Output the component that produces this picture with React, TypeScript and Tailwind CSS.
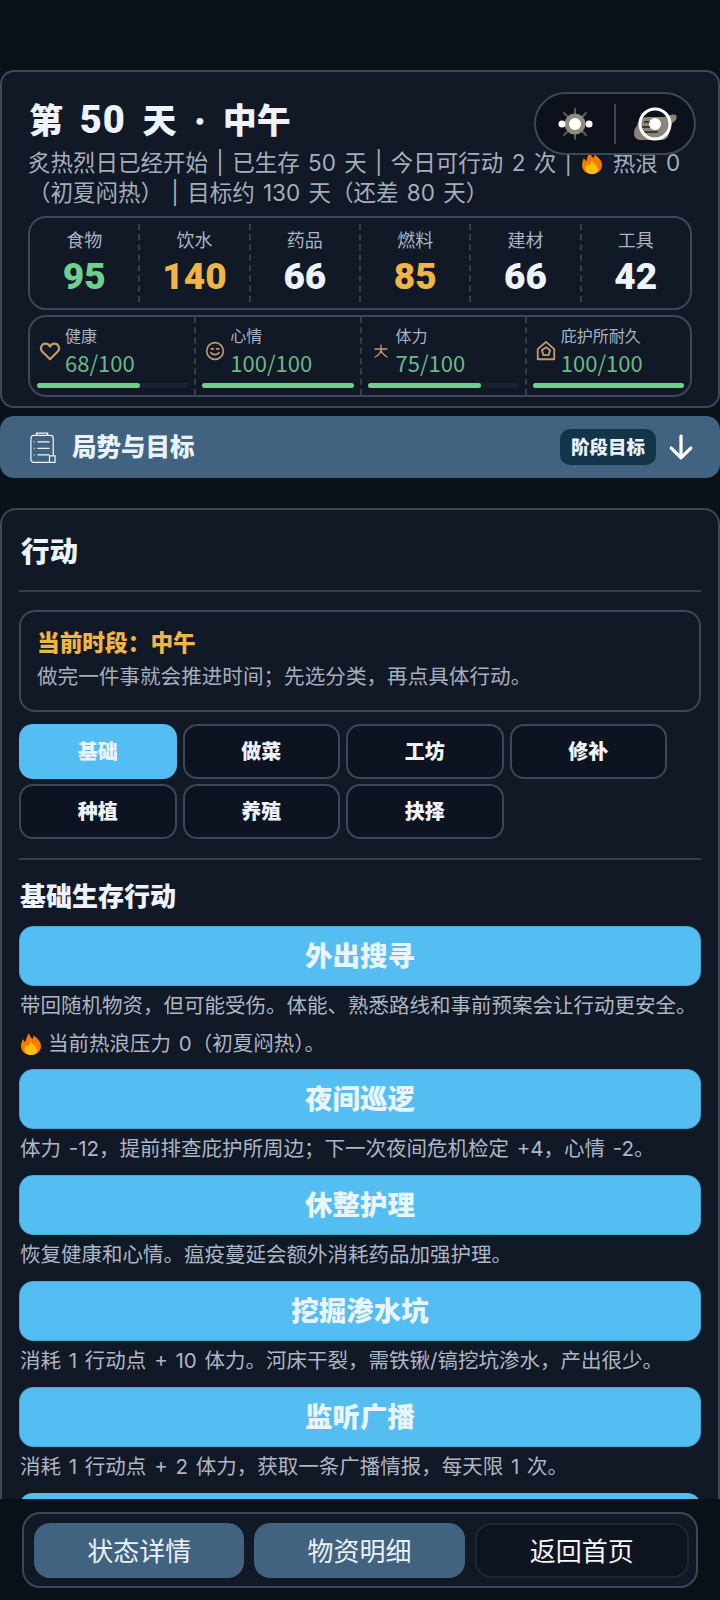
const FONT = 'Inter, "Noto Sans CJK SC", "Noto Sans", sans-serif';

const STOCKS = [
  { label: "食物", value: "95", color: "text-[#6fcf8e]" },
  { label: "饮水", value: "140", color: "text-[#f0b545]" },
  { label: "药品", value: "66", color: "text-[#eef3fb]" },
  { label: "燃料", value: "85", color: "text-[#f0b545]" },
  { label: "建材", value: "66", color: "text-[#eef3fb]" },
  { label: "工具", value: "42", color: "text-[#eef3fb]" },
];

const TABS = ["基础", "做菜", "工坊", "修补", "种植", "养殖", "抉择"];

function Flame({ className }: { className?: string }) {
  return (
    <svg viewBox="0 0 24 24" className={className}>
      <path d="M12 23c-6 0-10-4-10-9 0-3 1-5 2-7 .5 1.500 1.500 2.500 2.500 3C7 7 8 4 10 1c.5 3 2 5 3.500 6 .5-1 1-2 1-3.500 3 2 7.500 5.500 7.500 10.500 0 5-4 9-10 9z" fill="#f57c00" />
      <path d="M12 23c-4 0-6.500-2.500-6.500-5.500 0-2 1-3.500 2.500-5 .5 1 1 1.500 2 2 0-2 1-3.500 2-5 .5 2 4 4 6 8 .5 3-2 5.500-6 5.500z" fill="#ffc107" />
    </svg>
  );
}

function HeartIcon() {
  return (
    <svg viewBox="0 0 24 24" className="w-[22px] h-[22px]" fill="none" stroke="#c39a6b" strokeWidth="2.400">
      <path d="M12 21 3.500 12.500C.5 9 3 4 7 4c2.200 0 4 1.200 5 3 1-1.800 2.800-3 5-3 4 0 6.500 5 3.500 8.500z" strokeLinejoin="round" />
    </svg>
  );
}

function SmileIcon() {
  return (
    <svg viewBox="0 0 24 24" className="w-[20px] h-[20px]" fill="none" stroke="#c39a6b" strokeWidth="2">
      <circle cx="12" cy="12" r="10" />
      <path d="M7 14c1.500 3 8.500 3 10 0" strokeLinecap="round" />
      <path d="M7.500 9.500h2.500M14 9.500h2.500" strokeLinecap="round" />
    </svg>
  );
}

function RunIcon() {
  return (
    <svg viewBox="0 0 24 24" className="w-[16px] h-[16px]" fill="none" stroke="#c39a6b" strokeWidth="2">
      <path d="M3 9h18M12 3v6c0 5-3 9-9 12M12 10c1 5 4 8 9 11" strokeLinecap="round" />
    </svg>
  );
}

function ShelterIcon() {
  return (
    <svg viewBox="0 0 24 24" className="w-[22px] h-[22px]" fill="none" stroke="#c39a6b" strokeWidth="2">
      <path d="M3 10 12 2l9 8v11H3z" strokeLinejoin="round" />
      <path d="m12 8 4.500 3.200-1.700 5.300H9.200l-1.700-5.300z" strokeLinejoin="round" />
    </svg>
  );
}

function ClipboardIcon() {
  return (
    <svg viewBox="0 0 28 34" className="w-[26px] h-[33px]" fill="none" stroke="#f1f6fb" strokeWidth="1.300">
      <rect x="1" y="4" width="24" height="29" rx="3" />
      <path d="M7 4V1.500h12V4" />
      <path d="M8 11h13M8 18h13M8 25h13" />
      <path d="M4 11h1M4 18h1M4 25h1" />
      <rect x="21" y="26" width="6" height="7" fill="#41637f" />
    </svg>
  );
}

function SunIcon() {
  return (
    <svg viewBox="0 0 44 44" className="w-[44px] h-[44px]">
      <g stroke="#5f5c54" strokeWidth="2" strokeLinecap="round">
        <path d="M22 7v6M22 31v6M11 11l4 4M33 11l-4 4M11 33l4-4M33 33l-4-4" />
      </g>
      <circle cx="22" cy="22" r="10.500" fill="#8f8b7f" />
      <circle cx="22" cy="22" r="6" fill="#ffffff" />
      <circle cx="36" cy="22" r="3.500" fill="#ffffff" />
      <circle cx="9" cy="22" r="3.500" fill="#ffffff" />
    </svg>
  );
}

function CameraIcon() {
  return (
    <svg viewBox="0 0 46 44" className="w-[46px] h-[44px]">
      <path d="M5 24c1-6 6-9 10-9h16c4 0 8-4 13-2 2 3-1 7-4 8l-3 11c-1 4-4 6-8 6H9c-5 0-7-3-7-7 0-3 1-5 3-7z" fill="#8a8578" />
      <path d="M12 20h16M10 25h16M12 30h14" stroke="#3c3b36" strokeWidth="2" />
      <circle cx="23" cy="22" r="15" fill="none" stroke="#ffffff" strokeWidth="3" />
      <circle cx="23" cy="22" r="6" fill="#ffffff" />
    </svg>
  );
}

function Vital({ icon, label, value, pct, divider }: { icon: React.ReactNode; label: string; value: string; pct: number; divider: boolean }) {
  return (
    <div className={`flex-1 min-w-0 pr-[6px] pt-[8px] ${divider ? "pl-[6px] border-l-2 border-dashed border-[#333d4d]" : "pl-[7px]"}`}>
      <div className="flex items-center">
        <div className="w-[26px] flex justify-center shrink-0">{icon}</div>
        <div className="ml-[2px] min-w-0">
          <div className="text-[16px] leading-[22px] text-[#aab3c2] whitespace-nowrap">{label}</div>
          <div className="font-['Noto_Sans_CJK_SC'] text-[22px] leading-[30px] text-[#6bb786] whitespace-nowrap">{value}</div>
        </div>
      </div>
      <div className="h-[5px] mt-[6px] rounded-full bg-[#1a2130]">
        <div className="h-full rounded-full bg-[#6fcf8e]" style={{ width: `${pct}%` }} />
      </div>
    </div>
  );
}

function ActionButton({ title, desc, extra }: { title: string; desc: string; extra?: boolean }) {
  return (
    <div className={extra ? "mb-[10px]" : "mb-[11px]"}>
      <button className="w-full h-[60px] pt-[2px] rounded-[14px] bg-[#54bdf2] border border-[#4aa6d6] text-[#eaf4fb] text-[27.500px] font-black">
        {title}
      </button>
      <p className="mt-[5px] ml-[1px] text-[20.500px] leading-[30px] text-[#aeb6c4] whitespace-nowrap [word-spacing:2px]">{desc}</p>
      {extra && (
        <p className="mt-[8px] flex items-center text-[20.500px] leading-[30px] text-[#aeb6c4] whitespace-nowrap [word-spacing:2px]">
          <Flame className="w-[24px] h-[24px] mr-[5px]" />
          当前热浪压力 0（初夏闷热）。
        </p>
      )}
    </div>
  );
}

export default function App() {
  return (
    <div
      className="relative w-[720px] h-[1600px] overflow-hidden bg-[#0a1119]"
      style={{ fontFamily: FONT }}
    >
      <div className="pt-[70px]">
        {/* Status card */}
        <section className="relative h-[338px] rounded-[14px] border-2 border-[#3d4757] bg-[#111826] px-[26px]">
          <h1 className="pt-[23px] ml-[1px] text-[34px] leading-[50px] font-black text-[#eef3fb] whitespace-nowrap [word-spacing:10px]">
            第 <span className="font-[Roboto] text-[38px] tracking-[1px]">50</span> 天 · 中午
          </h1>
          <p className="mt-[2px] text-[22.500px] leading-[30px] text-[#a5aebd] whitespace-nowrap [word-spacing:2px]">
            炙热烈日已经开始 | 已生存 50 天 | 今日可行动 2 次 |{" "}
            <Flame className="inline-block w-[24px] h-[24px] align-[-4px]" /> 热浪 0
          </p>
          <p className="text-[22.500px] leading-[30px] text-[#a5aebd] whitespace-nowrap [word-spacing:2px]">
            （初夏闷热） | 目标约 130 天（还差 80 天）
          </p>

          <div className="mt-[8px] h-[94px] rounded-[18px] border-2 border-[#3d4757] flex items-stretch py-[6px]">
            {STOCKS.map((s, i) => (
              <div
                key={s.label}
                className={`flex-1 flex flex-col items-center ${i > 0 ? "border-l-2 border-dashed border-[#333d4d]" : ""}`}
              >
                <div className="text-[18px] leading-[33px] text-[#aab3c2]">{s.label}</div>
                <div className={`font-[Roboto] text-[37px] leading-[40px] font-black ${s.color}`}>{s.value}</div>
              </div>
            ))}
          </div>

          <div className="mt-[5px] h-[82px] rounded-[18px] border-2 border-[#3d4757] flex items-stretch">
            <Vital icon={<HeartIcon />} label="健康" value="68/100" pct={68} divider={false} />
            <Vital icon={<SmileIcon />} label="心情" value="100/100" pct={100} divider />
            <Vital icon={<RunIcon />} label="体力" value="75/100" pct={75} divider />
            <Vital icon={<ShelterIcon />} label="庇护所耐久" value="100/100" pct={100} divider />
          </div>

          <div className="absolute left-[532px] top-[20px] w-[162px] h-[63px] rounded-full border-2 border-[#3d4757] bg-[#0c111c] flex items-center">
            <div className="flex-1 flex justify-center"><SunIcon /></div>
            <div className="w-[2px] h-[40px] bg-[#3d4757]" />
            <div className="flex-1 flex justify-center"><CameraIcon /></div>
          </div>
        </section>

        {/* Goals bar */}
        <div className="mt-[8px] h-[62px] rounded-[14px] bg-[#41637f] flex items-center pl-[30px] pr-[26px]">
          <ClipboardIcon />
          <span className="ml-[16px] text-[24.500px] font-black text-[#eaf2f9]">局势与目标</span>
          <span className="ml-auto h-[36px] px-[11px] rounded-[10px] bg-[#14344a] text-[18.500px] leading-[36px] font-black text-[#eaf2f9]">
            阶段目标
          </span>
          <svg viewBox="0 0 24 24" className="ml-[12px] w-[26px] h-[26px]" fill="none" stroke="#ffffff" strokeWidth="3" strokeLinecap="round" strokeLinejoin="round">
            <path d="M12 2v20M3 13l9 9 9-9" />
          </svg>
        </div>

        {/* Actions card */}
        <section className="mt-[30px] rounded-t-[16px] border-2 border-[#3d4757] bg-[#111826] px-[17px] pb-[20px]">
          <h2 className="pt-[21px] ml-[2px] text-[28.500px] leading-[42px] font-black text-[#eef3fb]">行动</h2>
          <div className="mt-[17px] h-[2px] bg-[#353f4e]" />

          <div className="mt-[18px] h-[102px] rounded-[16px] border-2 border-[#3d4757] px-[16px] pt-[15px]">
            <div className="text-[22.700px] leading-[32px] font-black text-[#f0b545]">当前时段：中午</div>
            <div className="mt-[3px] text-[20.600px] leading-[30px] text-[#a5aebd]">做完一件事就会推进时间；先选分类，再点具体行动。</div>
          </div>

          <div className="mt-[12px] grid grid-cols-[157.500px_157.500px_157.500px_157.500px] gap-x-[6px] gap-y-[5px]">
            {TABS.map((t, i) => (
              <button
                key={t}
                className={`h-[55px] rounded-[14px] text-[20px] font-black ${
                  i === 0
                    ? "bg-[#54bdf2] text-[#eaf4fb]"
                    : "bg-[#0d1320] border-2 border-[#3d4757] text-[#eef3fb]"
                }`}
              >
                {t}
              </button>
            ))}
          </div>

          <div className="mt-[19px] h-[2px] bg-[#353f4e]" />
          <h3 className="mt-[18px] ml-[1px] text-[26px] leading-[38px] font-black text-[#eef3fb]">基础生存行动</h3>

          <div className="mt-[10px]">
            <ActionButton title="外出搜寻" desc="带回随机物资，但可能受伤。体能、熟悉路线和事前预案会让行动更安全。" extra />
            <ActionButton title="夜间巡逻" desc="体力 -12，提前排查庇护所周边；下一次夜间危机检定 +4，心情 -2。" />
            <ActionButton title="休整护理" desc="恢复健康和心情。瘟疫蔓延会额外消耗药品加强护理。" />
            <ActionButton title="挖掘渗水坑" desc="消耗 1 行动点 + 10 体力。河床干裂，需铁锹/镐挖坑渗水，产出很少。" />
            <ActionButton title="监听广播" desc="消耗 1 行动点 + 2 体力，获取一条广播情报，每天限 1 次。" />
            <button className="w-full h-[60px] rounded-[14px] bg-[#54bdf2]" />
          </div>
        </section>
      </div>

      {/* Bottom bar */}
      <div className="absolute left-0 right-0 bottom-0 h-[101px] bg-[#0a1119] px-[22px] pt-[13px]">
        <div className="h-[76px] rounded-[18px] border-2 border-[#3d4757] bg-[#111826] flex items-center gap-[10px] pl-[10px] pr-[7px]">
          <button className="flex-1 h-[55px] pt-[2px] rounded-[16px] bg-[#41637f] text-[26px] text-[#eaf2f9]">状态详情</button>
          <button className="flex-1 h-[55px] pt-[2px] rounded-[16px] bg-[#41637f] text-[26px] text-[#eaf2f9]">物资明细</button>
          <button className="flex-1 h-[55px] pt-[2px] rounded-[16px] bg-[#0e1420] border-2 border-[#1f2734] text-[26px] text-[#f2f5fa]">返回首页</button>
        </div>
      </div>
    </div>
  );
}
